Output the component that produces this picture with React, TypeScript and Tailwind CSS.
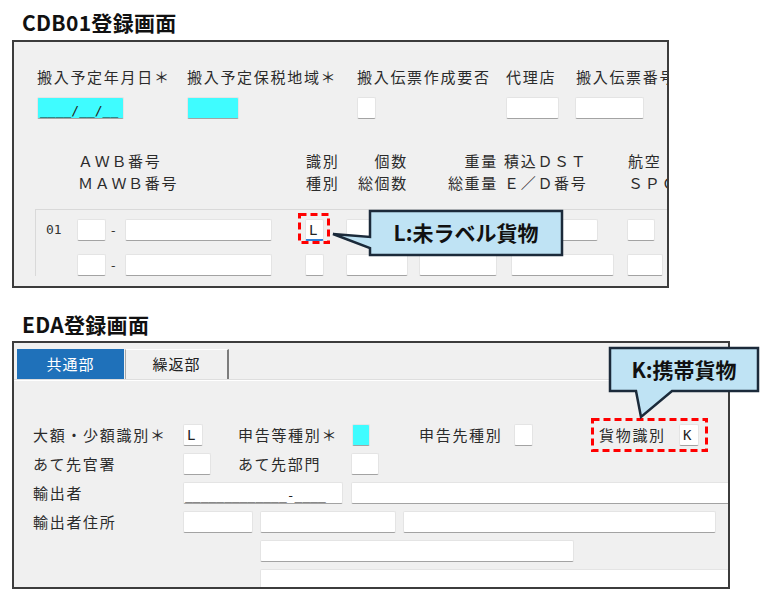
import type { ReactNode } from 'react'

const jp = "font-['Noto_Sans_CJK_JP','Noto_Sans',sans-serif]"
const mono = "font-['DejaVu_Sans_Mono','Liberation_Mono',monospace]"

function Box({
  className = '',
  cyan = false,
  focus = false,
  children,
}: {
  className?: string
  cyan?: boolean
  focus?: boolean
  children?: ReactNode
}) {
  const bg = cyan ? 'bg-[#3ffcff]' : 'bg-white'
  const edge = focus
    ? 'border-b-2 border-b-[#2f7fd6]'
    : 'border-b border-b-[#a3a3a3]'
  return (
    <div
      className={`flex h-[22px] shrink-0 items-center overflow-hidden rounded-[2px] border-x border-t border-x-[#e4e4e4] border-t-[#e4e4e4] ${edge} ${bg} ${mono} leading-none text-[#222] ${className}`}
    >
      {children}
    </div>
  )
}

function Label({ className = '', children }: { className?: string; children: ReactNode }) {
  return (
    <span
      className={`shrink-0 whitespace-nowrap text-[15px] leading-[22px] tracking-[1.7px] text-[#2b2b2b] ${className}`}
    >
      {children}
    </span>
  )
}

function Dashed({ className, w, h }: { className: string; w: number; h: number }) {
  return (
    <svg className={`absolute ${className}`} width={w} height={h}>
      <rect
        x={1.5}
        y={1.5}
        width={w - 3}
        height={h - 3}
        fill="none"
        stroke="#ff0000"
        strokeWidth={3}
        strokeDasharray="7 4"
      />
    </svg>
  )
}

export default function App() {
  return (
    <div className={`relative h-[594px] w-[772px] overflow-hidden bg-white ${jp}`}>
      <h1 className="pl-[22px] pt-[10px] text-[21px] font-bold leading-[24px] tracking-[0.3px] text-[#111]">
        CDB01登録画面
      </h1>

      {/* CDB01 */}
      <section className="ml-[12px] mt-[6px] h-[248px] w-[657px] overflow-hidden border-2 border-[#3c3c3c] bg-[#f0f0f0]">
        <div className="flex pl-[23px] pt-[24px]">
          <div className="flex w-[150px] shrink-0 flex-col gap-[9px]">
            <Label>搬入予定年月日＊</Label>
            <Box cyan className="w-[87px] items-end pb-[1px] pl-[2px] text-[13px] text-[#1d3f66]">
              ____/__/__
            </Box>
          </div>
          <div className="flex w-[170px] shrink-0 flex-col gap-[9px]">
            <Label>搬入予定保税地域＊</Label>
            <Box cyan className="w-[52px]" />
          </div>
          <div className="flex w-[149px] shrink-0 flex-col gap-[9px]">
            <Label>搬入伝票作成要否</Label>
            <Box className="w-[19px]" />
          </div>
          <div className="flex w-[70px] shrink-0 flex-col gap-[9px]">
            <Label>代理店</Label>
            <Box className="w-[53px]" />
          </div>
          <div className="flex shrink-0 flex-col gap-[9px]">
            <Label>搬入伝票番号</Label>
            <Box className="-ml-px w-[69px]" />
          </div>
        </div>

        <div className="ml-[64px] mt-[31px] flex text-[15px] leading-[22px] tracking-[1.7px] text-[#2b2b2b]">
          <div className="w-[228px] shrink-0 whitespace-nowrap">
            <div>ＡＷＢ番号</div>
            <div>ＭＡＷＢ番号</div>
          </div>
          <div className="w-[50px] shrink-0">
            <div>識別</div>
            <div>種別</div>
          </div>
          <div className="w-[52px] shrink-0 text-right">
            <div>個数</div>
            <div>総個数</div>
          </div>
          <div className="w-[90px] shrink-0 text-right">
            <div>重量</div>
            <div>総重量</div>
          </div>
          <div className="w-[130px] shrink-0 whitespace-nowrap pl-[6px]">
            <div>積込ＤＳＴ</div>
            <div>Ｅ／Ｄ番号</div>
          </div>
          <div className="shrink-0 whitespace-nowrap">
            <div>航空</div>
            <div>ＳＰＣ</div>
          </div>
        </div>

        <div className="ml-[21px] mt-[15px] flex flex-col gap-[13px] border-l border-t border-[#d9d9d9] pl-[10px] pt-[9px]">
          <div className="flex items-center">
            <span className={`w-[31px] shrink-0 ${mono} text-[13px] text-[#333]`}>01</span>
            <Box className="w-[29px]" />
            <span className="w-[19px] shrink-0 pl-[5px] text-[13px] text-[#333]">-</span>
            <Box className="w-[147px]" />
            <Box focus className="ml-[33px] w-[19px] pl-[3px] text-[14px]">
              L
            </Box>
            <Box className="ml-[22px] w-[62px]" />
            <Box className="ml-[11px] w-[78px]" />
            <Box className="ml-[14px] w-[87px]" />
            <Box className="ml-[29px] w-[28px]" />
          </div>
          <div className="flex items-center">
            <span className="w-[31px] shrink-0" />
            <Box className="w-[29px]" />
            <span className="w-[19px] shrink-0 pl-[5px] text-[13px] text-[#333]">-</span>
            <Box className="w-[147px]" />
            <Box className="ml-[33px] w-[19px]" />
            <Box className="ml-[22px] w-[62px]" />
            <Box className="ml-[11px] w-[78px]" />
            <Box className="ml-[14px] w-[103px]" />
            <Box className="ml-[13px] w-[36px]" />
          </div>
        </div>
      </section>

      <h1 className="pl-[22px] pt-[24px] text-[21px] font-bold leading-[24px] tracking-[0.3px] text-[#111]">
        EDA登録画面
      </h1>

      {/* EDA */}
      <section className="ml-[12px] mt-[5px] h-[248px] w-[718px] overflow-hidden border-2 border-[#3c3c3c] bg-[#f0f0f0]">
        <div className="flex pl-[3px] pt-[6px]">
          <div className="flex h-[30px] w-[107px] items-center justify-center bg-[#1f71ba] text-[15px] tracking-[1px] text-white">
            共通部
          </div>
          <div className="ml-px flex h-[30px] w-[104px] items-center justify-center border-l border-r-2 border-t border-l-[#a8a8a8] border-r-[#7c7c7c] border-t-white text-[15px] tracking-[1px] text-[#222]">
            繰返部
          </div>
        </div>
        <div className="h-px bg-[#dedede]" />
        <div className="h-px bg-white" />

        <div className="mt-[43px] flex flex-col gap-[7px] pl-[19px]">
          <div className="flex h-[22px] items-center">
            <Label className="w-[150px]">大額・少額識別＊</Label>
            <Box className="w-[20px] pl-[3px] text-[14px]">L</Box>
            <Label className="ml-[35px] w-[114px]">申告等種別＊</Label>
            <Box cyan className="w-[18px]" />
            <Label className="ml-[49px] w-[95px]">申告先種別</Label>
            <Box className="w-[19px]" />
            <Label className="ml-[66px] w-[80px]">貨物識別</Label>
            <Box className="w-[20px] pl-[3px] text-[14px]">K</Box>
          </div>
          <div className="flex h-[22px] items-center">
            <Label className="w-[150px]">あて先官署</Label>
            <Box className="w-[28px]" />
            <Label className="ml-[27px] w-[113px]">あて先部門</Label>
            <Box className="w-[28px]" />
          </div>
          <div className="flex h-[22px] items-center">
            <Label className="w-[150px]">輸出者</Label>
            <Box className="w-[160px] items-end pb-[1px] pl-[1px] text-[13px]">
              _____________-____
            </Box>
            <Box className="ml-[8px] w-[420px]" />
          </div>
          <div className="flex h-[22px] items-center">
            <Label className="w-[150px]">輸出者住所</Label>
            <Box className="w-[70px]" />
            <Box className="ml-[7px] w-[136px]" />
            <Box className="ml-[7px] w-[313px]" />
          </div>
          <div className="flex h-[22px] items-center pl-[227px]">
            <Box className="w-[314px]" />
          </div>
          <div className="flex h-[22px] items-center pl-[227px]">
            <Box className="w-[500px]" />
          </div>
        </div>
      </section>

      {/* highlight frames */}
      <Dashed className="left-[298px] top-[213px]" w={32} h={31} />
      <Dashed className="left-[591px] top-[418px]" w={117} h={34} />

      {/* callout: L */}
      <div className="absolute left-[331px] top-[209px] h-[48px] w-[233px]">
        <svg className="absolute inset-0" width={233} height={48}>
          <path
            d="M39,2 H231 V46 H39 V39 L2,25 L39,28 Z"
            fill="#bfe3f4"
            stroke="#1b2a3a"
            strokeWidth={2.5}
          />
        </svg>
        <div className="absolute left-[39px] top-[2px] flex h-[44px] w-[192px] items-center justify-center text-[21px] font-bold text-[#111]">
          L:未ラベル貨物
        </div>
      </div>

      {/* callout: K */}
      <div className="absolute left-[608px] top-[346px] h-[74px] w-[152px]">
        <svg className="absolute inset-0" width={152} height={74}>
          <path
            d="M2,2 H150 V45 H64 L33,71 L28,45 H2 Z"
            fill="#bfe3f4"
            stroke="#1b2a3a"
            strokeWidth={2.5}
          />
        </svg>
        <div className="absolute left-[2px] top-[2px] flex h-[43px] w-[148px] items-center justify-center text-[21px] font-bold text-[#111]">
          K:携帯貨物
        </div>
      </div>
    </div>
  )
}
